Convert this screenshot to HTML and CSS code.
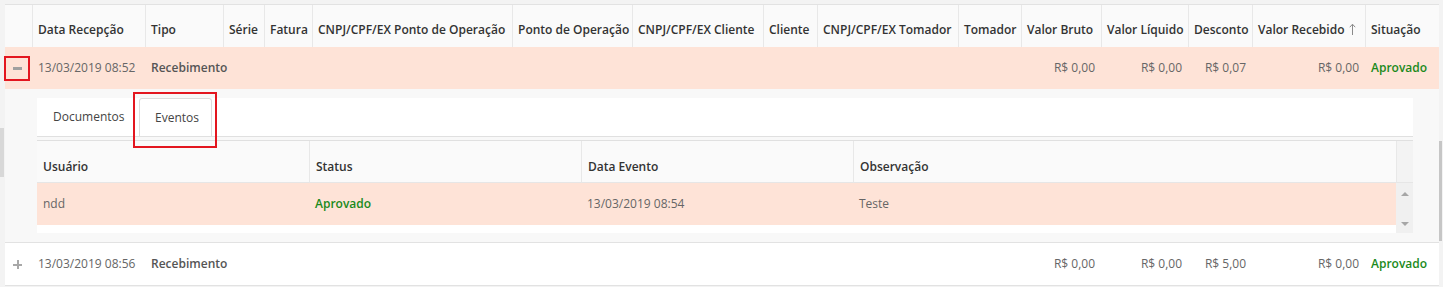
FILE: index.html
```html
<!DOCTYPE html>
<html lang="pt-BR">
<head>
    <meta charset="UTF-8">
    <title>Recebimentos</title>
    <link rel="stylesheet" href="styles.css">
</head>
<body>
    <div class="page">
        <div class="scroll-left"></div>
        <div class="scroll-right"></div>

        <table class="grid">
            <colgroup>
                <col style="width:27px"><col style="width:113px"><col style="width:78px"><col style="width:41px">
                <col style="width:48px"><col style="width:200px"><col style="width:120px"><col style="width:131px">
                <col style="width:54px"><col style="width:141px"><col style="width:63px"><col style="width:80px">
                <col style="width:87px"><col style="width:64px"><col style="width:113px"><col style="width:74px">
            </colgroup>
            <thead>
                <tr>
                    <th class="first"></th>
                    <th>Data Recepção</th>
                    <th>Tipo</th>
                    <th>Série</th>
                    <th>Fatura</th>
                    <th>CNPJ/CPF/EX Ponto de Operação</th>
                    <th>Ponto de Operação</th>
                    <th>CNPJ/CPF/EX Cliente</th>
                    <th>Cliente</th>
                    <th>CNPJ/CPF/EX Tomador</th>
                    <th>Tomador</th>
                    <th>Valor Bruto</th>
                    <th>Valor Líquido</th>
                    <th>Desconto</th>
                    <th>Valor Recebido <svg class="sort" width="7" height="12" viewBox="0 0 7 12"><path d="M3.5 1.5V12M0.8 4.2L3.5 1.2L6.2 4.2" fill="none" stroke="#8a8a8a" stroke-width="1"/></svg></th>
                    <th>Situação</th>
                </tr>
            </thead>
            <tbody>
                <tr class="row selected">
                    <td class="expand"><span class="minus"></span><span class="mark mark-toggle"></span></td>
                    <td>13/03/2019 08:52</td>
                    <td class="strong">Recebimento</td>
                    <td></td><td></td><td></td><td></td><td></td><td></td><td></td><td></td>
                    <td class="num">R$ 0,00</td>
                    <td class="num">R$ 0,00</td>
                    <td class="num">R$ 0,07</td>
                    <td class="num">R$ 0,00</td>
                    <td class="ok">Aprovado</td>
                </tr>
                <tr class="detail-row">
                    <td colspan="16">
                        <div class="detail">
                            <div class="tabs">
                                <div class="tab tab-docs">Documentos</div>
                                <div class="tab tab-events active">Eventos<span class="mark mark-tab"></span></div>
                            </div>
                            <table class="events">
                                <colgroup>
                                    <col style="width:272px"><col style="width:272px"><col style="width:272px">
                                    <col style="width:543px"><col style="width:17px">
                                </colgroup>
                                <thead>
                                    <tr>
                                        <th class="first">Usuário</th>
                                        <th>Status</th>
                                        <th>Data Evento</th>
                                        <th>Observação</th>
                                        <th class="sb-head"></th>
                                    </tr>
                                </thead>
                                <tbody>
                                    <tr class="selected">
                                        <td>ndd</td>
                                        <td class="ok">Aprovado</td>
                                        <td>13/03/2019 08:54</td>
                                        <td>Teste</td>
                                        <td class="sb-track" rowspan="2">
                                            <div class="sb-arrows"><span class="up"></span><span class="down"></span></div>
                                        </td>
                                    </tr>
                                    <tr class="filler"><td colspan="4"></td></tr>
                                </tbody>
                            </table>
                        </div>
                    </td>
                </tr>
                <tr class="row last">
                    <td class="expand"><span class="plus"></span></td>
                    <td>13/03/2019 08:56</td>
                    <td class="strong">Recebimento</td>
                    <td></td><td></td><td></td><td></td><td></td><td></td><td></td><td></td>
                    <td class="num">R$ 0,00</td>
                    <td class="num">R$ 0,00</td>
                    <td class="num">R$ 5,00</td>
                    <td class="num">R$ 0,00</td>
                    <td class="ok">Aprovado</td>
                </tr>
            </tbody>
        </table>
    </div>
</body>
</html>
```

FILE: styles.css
```css
body {
    margin: 0;
    background-color: #f3f3f3;
    font-family: 'Open Sans', 'Liberation Sans', sans-serif;
    font-size: 12px;
    color: #666;
}

.page {
    position: relative;
    padding: 4px 4px 0 5px;
    height: 283px;
}

.scroll-left {
    position: absolute;
    left: 0;
    top: 128px;
    width: 4px;
    height: 49px;
    background-color: #d8d8d8;
}

.scroll-right {
    position: absolute;
    left: 1439px;
    top: 141px;
    width: 3px;
    height: 100px;
    background-color: #c6c6c6;
}

table {
    border-collapse: separate;
    border-spacing: 0;
    table-layout: fixed;
}

.grid {
    width: 1434px;
    border-top: 1px solid #e2e2e2;
    border-bottom: 1px solid #e2e2e2;
    background-color: #f8f8f8;
}

.grid th {
    background-color: #fafafa;
    border-left: 1px solid #e8e8e8;
    color: #333;
    font-weight: 600;
    text-align: left;
    white-space: nowrap;
    line-height: 16px;
    padding: 17px 5px 9px 5px;
    overflow: hidden;
}

.grid th.first {
    border-left: none;
}

.sort {
    vertical-align: -1px;
    margin-left: 1px;
}

.row td {
    background-color: #fff;
    line-height: 16px;
    padding: 13px 6px;
    white-space: nowrap;
}

.row.selected td {
    background-color: #fee3d7;
}

.row.last td {
    border-top: 1px solid #e2e2e2;
}

.expand {
    position: relative;
}

.minus {
    display: block;
    width: 9px;
    height: 3px;
    margin-left: 2px;
    background-color: #a0a0a0;
}

.plus {
    display: block;
    position: relative;
    width: 9px;
    height: 9px;
    margin-left: 2px;
}

.plus::before,
.plus::after {
    content: "";
    position: absolute;
    background-color: #a8a8a8;
}

.plus::before {
    left: 0;
    top: 4px;
    width: 9px;
    height: 2px;
}

.plus::after {
    left: 4px;
    top: 0;
    width: 2px;
    height: 9px;
}

.strong {
    font-weight: 600;
    color: #555;
}

.num {
    text-align: right;
}

.ok {
    color: #1b8a1b;
    font-weight: 600;
}

.mark {
    position: absolute;
    border: 2px solid #e3161f;
    box-sizing: border-box;
}

.mark-toggle {
    left: -1px;
    top: 9px;
    width: 26px;
    height: 25px;
}

/* detail */

.detail-row > td {
    padding: 0;
}

.detail {
    padding: 9px 26px 9px 32px;
    background-color: #f8f8f8;
}

.tabs {
    display: flex;
    background-color: #fff;
    border-bottom: 1px solid #e0e0e0;
    height: 38px;
}

.tab {
    position: relative;
    box-sizing: border-box;
    height: 38px;
    line-height: 38px;
    color: #444;
    padding-left: 16px;
}

.tab-docs {
    width: 102px;
}

.tab-events {
    width: 73px;
    padding-left: 15px;
}

.tab.active {
    border: 1px solid #dcdcdc;
    border-bottom: none;
    border-radius: 3px 3px 0 0;
    line-height: 37px;
}

.mark-tab {
    left: -7px;
    top: -7px;
    width: 84px;
    height: 56px;
}

.events {
    width: 1376px;
    margin-top: 3px;
    border-top: 1px solid #e0e0e0;
    background-color: #fff;
}

.events th {
    background-color: #fafafa;
    border-left: 1px solid #e8e8e8;
    border-bottom: 1px solid #e6e6e6;
    color: #333;
    font-weight: 600;
    text-align: left;
    line-height: 16px;
    padding: 18px 6px 7px;
}

.events th.first {
    border-left: none;
}

.events th.sb-head {
    background-color: #f3f3f3;
    padding: 0;
}

.events td {
    line-height: 16px;
    padding: 13px 6px;
}

.events tr.selected td {
    background-color: #fee3d7;
}

.events tr.filler td {
    height: 8px;
    padding: 0;
    background-color: #fff;
}

.events tr td.sb-track {
    background-color: #f0f0f0;
    padding: 0;
    vertical-align: top;
}

.sb-arrows {
    display: flex;
    flex-direction: column;
    justify-content: space-between;
    align-items: center;
    height: 50px;
    padding: 9px 0 7px;
    box-sizing: border-box;
}

.up,
.down {
    width: 0;
    height: 0;
    border-left: 4px solid transparent;
    border-right: 4px solid transparent;
}

.up {
    border-bottom: 4px solid #a6a6a6;
}

.down {
    border-top: 4px solid #a6a6a6;
}
```
